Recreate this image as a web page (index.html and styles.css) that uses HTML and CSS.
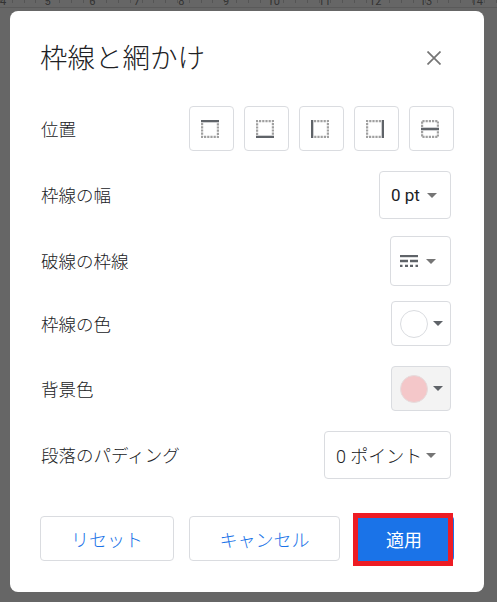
FILE: index.html
```html
<!DOCTYPE html>
<html lang="ja">
<head>
<meta charset="utf-8">
<title>枠線と網かけ</title>
<link rel="stylesheet" href="styles.css">
</head>
<body>
<div class="ruler">
  <span>4</span><span>5</span><span>6</span><span>7</span><span>8</span><span>9</span><span>10</span><span>11</span><span>12</span><span>13</span><span>14</span>
</div>
<main class="dialog">
  <header class="head">
    <h1 class="title">枠線と網かけ</h1>
    <svg class="close" width="14" height="14" viewBox="0 0 14 14"><path d="M0.5 0.5L13.5 13.5M13.5 0.5L0.5 13.5" stroke="#757575" stroke-width="1.7" fill="none"/></svg>
  </header>
  <div class="row row-pos">
    <span class="label">位置</span>
    <div class="pos-group">
      <button class="pos"><svg width="18" height="18" viewBox="0 0 18 18"><path class="dots" d="M1 3V17H17V3"/><path class="solid" d="M0 1H18"/></svg></button>
      <button class="pos"><svg width="18" height="18" viewBox="0 0 18 18"><path class="dots" d="M1 15V1H17V15"/><path class="solid" d="M0 17H18"/></svg></button>
      <button class="pos"><svg width="18" height="18" viewBox="0 0 18 18"><path class="dots" d="M3 1H17V17H3"/><path class="solid" d="M1 0V18"/></svg></button>
      <button class="pos"><svg width="18" height="18" viewBox="0 0 18 18"><path class="dots" d="M15 1H1V17H15"/><path class="solid" d="M17 0V18"/></svg></button>
      <button class="pos"><svg width="18" height="18" viewBox="0 0 18 18"><path class="dots" d="M1 7V1H17V7M1 11V17H17V11"/><path class="solid" d="M0 9H18"/></svg></button>
    </div>
  </div>
  <div class="row row-width">
    <span class="label">枠線の幅</span>
    <button class="select sel-width">0 pt<i class="caret"></i></button>
  </div>
  <div class="row row-dash">
    <span class="label">破線の枠線</span>
    <button class="select sel-dash"><svg width="18" height="12" viewBox="0 0 18 12"><path class="line" d="M0 1H18"/><path class="line" d="M0 6H8M10 6H18"/><path class="line" d="M0 11H2.5M5 11H8M10 11H13M15.500 11H18"/></svg><i class="caret"></i></button>
  </div>
  <div class="row row-color">
    <span class="label">枠線の色</span>
    <button class="select sel-color"><i class="swatch"></i><i class="caret caret-dark"></i></button>
  </div>
  <div class="row row-bg">
    <span class="label">背景色</span>
    <button class="select sel-color is-active"><i class="swatch swatch-pink"></i><i class="caret caret-dark"></i></button>
  </div>
  <div class="row row-pad">
    <span class="label">段落のパディング</span>
    <button class="select sel-pad">0 ポイント<i class="caret"></i></button>
  </div>
  <footer class="actions">
    <button class="btn btn-reset">リセット</button>
    <button class="btn btn-cancel">キャンセル</button>
    <div class="apply-wrap">
      <button class="btn-apply">適用</button>
      <div class="highlight"></div>
    </div>
  </footer>
</main>
</body>
</html>
```

FILE: styles.css
```css
* { box-sizing: border-box; }
html, body { margin: 0; height: 100%; }
body {
  background: #666666;
  font-family: "Roboto", "Noto Sans CJK JP", sans-serif;
  color: #202124;
  overflow: hidden;
}
.ruler {
  height: 8px;
  border-bottom: 1px solid #5a5a5a;
  background: repeating-linear-gradient(90deg, #555 0 1px, transparent 1px 11.8px) 0 0 / 100% 3px no-repeat;
  display: flex;
  justify-content: space-between;
  padding: 0 14px 0 0;
  font-size: 11px;
  line-height: 4px;
  color: #333;
  overflow: hidden;
}
.dialog {
  width: 474px;
  height: 581px;
  margin: 3px 0 0 10px;
  background: #fff;
  border-radius: 8px;
  padding: 0 33px 0 31px;
}
.head {
  height: 93px;
  margin-bottom: 2px;
  display: flex;
  justify-content: space-between;
  align-items: center;
  padding: 0 10px 0 0;
}
.title {
  margin: 0 0 0 -1px;
  padding-bottom: 3px;
  font-size: 27.5px;
  font-weight: 300;
  line-height: 34px;
  font-family: "Noto Sans CJK JP", sans-serif;
}
.close { display: block; }
.row {
  display: flex;
  justify-content: space-between;
  align-items: center;
}
.label { font-size: 17.5px; line-height: 24px; font-family: "Noto Sans CJK JP", sans-serif; font-weight: 300; }
.row-pos .label { padding-top: 1px; }
.row-width .label, .row-dash .label { padding-bottom: 1px; }
.row-pos { height: 45px; }
.row-width { height: 48px; margin-top: 20px; }
.row-dash { height: 50px; margin-top: 17px; }
.row-color { height: 45px; margin-top: 15px; }
.row-bg { height: 45px; margin-top: 20px; }
.row-pad { height: 48px; margin-top: 20px; }
.pos-group { display: flex; gap: 10px; margin-right: -3px; }
button { font-family: inherit; padding: 0; background: #fff; cursor: pointer; }
.pos {
  width: 45px;
  height: 45px;
  border: 1px solid #dadce0;
  border-radius: 4px;
  display: flex;
  align-items: center;
  justify-content: center;
}
.pos svg { display: block; fill: none; margin: 1px 3px 0 0; }
.dots { stroke: #a0a0a0; stroke-width: 2.4; stroke-dasharray: 2.2 1; }
.solid { stroke: #5f6368; stroke-width: 2.6; }
.select {
  height: 100%;
  border: 1px solid #dadce0;
  border-radius: 4px;
  display: flex;
  align-items: center;
  font-size: 17px;
  color: #202124;
}
.sel-width { width: 72px; padding-left: 11px; gap: 7px; }
.sel-dash { width: 61px; padding-left: 9px; gap: 8px; }
.sel-color { width: 60px; padding-left: 8px; gap: 5px; }
.sel-pad { width: 127px; padding-left: 11px; gap: 4px; font-size: 18px; font-weight: 300; }
.line { stroke: #5f6368; stroke-width: 2.4; fill: none; }
.caret {
  width: 0;
  height: 0;
  border-left: 5px solid transparent;
  border-right: 5px solid transparent;
  border-top: 5px solid #757575;
  flex: none;
}
.caret-dark { border-top-color: #5f6368; }
.swatch {
  width: 28px;
  height: 28px;
  border-radius: 50%;
  border: 1px solid #dadce0;
  background: #fff;
  flex: none;
}
.swatch-pink { background: #f4c7c9; border-color: #e6dcdd; }
.is-active { background: #f3f3f3; }
.actions { display: flex; margin-top: 37px; margin-left: -1px; }
.btn {
  flex: none;
  height: 45px;
  border: 1px solid #dadce0;
  border-radius: 4px;
  color: #1a73e8;
  font-size: 18px;
  font-weight: 300;
  font-family: "Noto Sans CJK JP", sans-serif;
  background: #fff;
}
.btn-reset { width: 134px; }
.btn-cancel { width: 151px; margin-left: 15px; }
.apply-wrap { position: relative; flex: none; width: 100px; height: 45px; margin-left: 14px; }
.btn-apply {
  display: block;
  width: 100%;
  height: 100%;
  border: 0;
  border-radius: 4px;
  background: #1a73e8;
  color: #fff;
  font-size: 18px;
}
.highlight {
  position: absolute;
  left: -1px;
  top: -3px;
  width: 100px;
  height: 53px;
  border: 5px solid #ed1c24;
}
```
